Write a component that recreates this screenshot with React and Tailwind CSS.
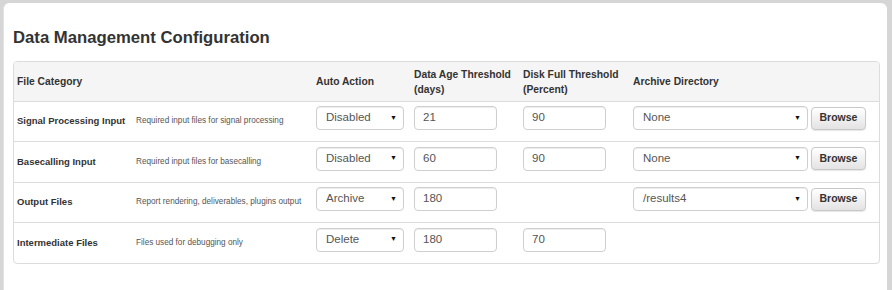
import React from 'react';

const rows = [
  {
    name: 'Signal Processing Input',
    desc: 'Required input files for signal processing',
    action: 'Disabled',
    age: '21',
    disk: '90',
    archive: 'None',
    h: 'h-[40px]',
  },
  {
    name: 'Basecalling Input',
    desc: 'Required input files for basecalling',
    action: 'Disabled',
    age: '60',
    disk: '90',
    archive: 'None',
    h: 'h-[41px]',
  },
  {
    name: 'Output Files',
    desc: 'Report rendering, deliverables, plugins output',
    action: 'Archive',
    age: '180',
    disk: null,
    archive: '/results4',
    h: 'h-[40px]',
  },
  {
    name: 'Intermediate Files',
    desc: 'Files used for debugging only',
    action: 'Delete',
    age: '180',
    disk: '70',
    archive: null,
    h: 'h-[40px]',
  },
];

const cols = 'grid grid-cols-[299px_98px_109px_110px_1fr] items-center pl-[3px]';

function Select({ value, width }) {
  return (
    <div
      className={`${width} h-[24px] flex items-center justify-between pl-[9px] pr-[6px] bg-white border border-[#cfcfcf] rounded-[4px] shadow-[inset_0_1px_1px_rgba(0,0,0,0.075)] text-[11.5px] text-[#555]`}
    >
      <span>{value}</span>
      <span className="text-[7px] text-[#111]">▼</span>
    </div>
  );
}

function Input({ value }) {
  return (
    <div className="w-[83px] h-[24px] flex items-center pl-[8px] bg-white border border-[#cfcfcf] rounded-[4px] shadow-[inset_0_1px_1px_rgba(0,0,0,0.075)] text-[11.5px] text-[#555]">
      {value}
    </div>
  );
}

export default function App() {
  return (
    <div
      className="w-[892px] h-[290px] bg-[#d6d6d6] pt-[3px] pl-[3px] pr-[5px] overflow-hidden"
      style={{ fontFamily: '"Liberation Sans", Arial, sans-serif' }}
    >
      <div className="h-full bg-white rounded-t-[6px] border-l border-[#e4e4e4] pl-[9px] pr-[7px] pt-[25px]">
        <h2 className="text-[16.7px] leading-[20px] font-bold text-[#333]">Data Management Configuration</h2>

        <div className="mt-[13px] border border-[#dcdcdc] rounded-[4px] overflow-hidden text-[#333]">
          {/* header */}
          <div className={`${cols} h-[40px] bg-[#f5f5f5] border-b border-[#dcdcdc] text-[10.3px] font-bold leading-[15px]`}>
            <div>File Category</div>
            <div>Auto Action</div>
            <div>Data Age Threshold<br />(days)</div>
            <div>Disk Full Threshold<br />(Percent)</div>
            <div>Archive Directory</div>
          </div>

          {rows.map((r, i) => (
            <div
              key={r.name}
              className={`${cols} ${r.h} ${i < rows.length - 1 ? 'border-b border-[#dcdcdc]' : ''}`}
            >
              <div className="flex items-center">
                <span className="w-[119px] shrink-0 text-[9.5px] font-bold">{r.name}</span>
                <span className="text-[8.2px] text-[#555]">{r.desc}</span>
              </div>
              <div className="pb-[7px]">
                <Select value={r.action} width="w-[88px]" />
              </div>
              <div className="pb-[7px]">
                <Input value={r.age} />
              </div>
              <div className="pb-[7px]">{r.disk && <Input value={r.disk} />}</div>
              <div className="pb-[7px] flex items-center gap-[3px]">
                {r.archive && (
                  <>
                    <Select value={r.archive} width="w-[175px]" />
                    <button className="w-[55px] h-[23px] border border-[#c8c8c8] rounded-[4px] bg-gradient-to-b from-white to-[#e3e3e3] shadow-[0_1px_1px_rgba(0,0,0,0.1)] text-[10.5px] font-bold text-[#333]">
                      Browse
                    </button>
                  </>
                )}
              </div>
            </div>
          ))}
        </div>
      </div>
    </div>
  );
}
